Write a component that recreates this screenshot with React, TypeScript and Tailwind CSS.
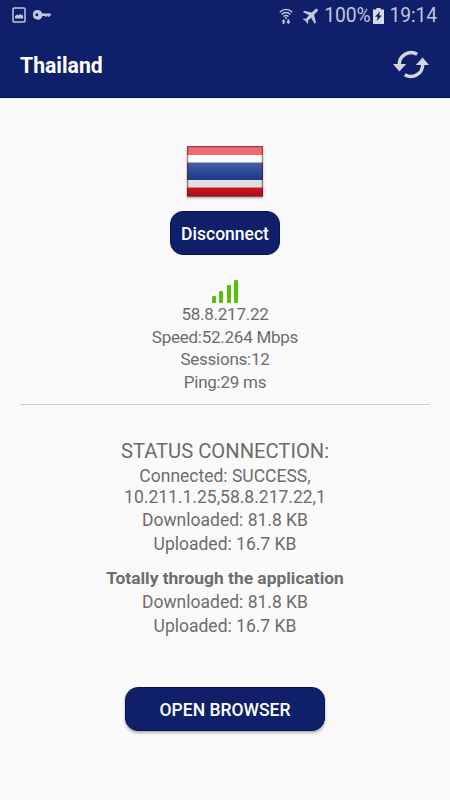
const serverInfo = ["58.8.217.22", "Speed:52.264 Mbps", "Sessions:12", "Ping:29 ms"];

const traffic = ["Downloaded: 81.8 KB", "Uploaded: 16.7 KB"];

function StatusBar() {
  return (
    <div className="flex h-8 items-center justify-between pl-3 pr-[13px] text-[#c3c6dc]">
      <div className="flex items-center gap-[7px]">
        <svg width="14" height="16" viewBox="0 0 14 16" fill="none" className="relative -top-px">
          <rect x="1" y="1" width="12" height="14" rx="1" stroke="currentColor" strokeWidth="1.5" />
          <path d="M3 11.4V9.3l2-1.8 1.3 1.1L8 6.8l1.2 1.4 1-.6.9 1.4v2.4z" fill="currentColor" />
        </svg>
        <svg width="18" height="10" viewBox="0 0 18 10" className="relative -top-px">
          <path
            d="M4.7 0a4.8 4.8 0 0 1 4.5 3.4H17a.9.9 0 0 1 .9.9v1.2h-1.4v1.3h-1.8V5.7h-1v1.1h-1.6V5.9H9.3A4.8 4.8 0 1 1 4.7 0zM3.8 3.3a1.5 1.5 0 1 0 0 3 1.5 1.5 0 0 0 0-3z"
            fill="currentColor"
            fillRule="evenodd"
          />
        </svg>
      </div>
      <div className="flex items-center">
        <svg width="14" height="16" viewBox="0 0 14 16" fill="none" stroke="currentColor" className="mr-[9px]">
          <path d="M.8 4.2c3.5-3.8 8.9-3.8 12.4 0M2.6 6.5c2.6-2.7 6.2-2.7 8.8 0M4.5 8.6c1.5-1.4 3.5-1.4 5 0" strokeWidth="1.4" />
          <circle cx="7" cy="9.9" r="1" fill="currentColor" stroke="none" />
          <path d="M4.6 11.2 6.4 13v.6H5.5V16H3.7v-2.4h-.9V13zM9.4 16 7.6 14.2v-.6h.9v-2.4h1.8v2.4h.9v.6z" fill="currentColor" stroke="none" />
        </svg>
        <svg width="17" height="17" viewBox="0 0 18 18" className="mr-[5px]">
          <path
            d="M16.4 1.2c.7.7.5 1.8-.2 2.5l-3.4 3.5 1.9 8.2-1.4 1.3-3.6-6.5-3.4 3.3.3 2.3-1 1-1.7-3.1L.8 12l1-1 2.4.3 3.2-3.5L1 4.3 2.4 3l8 1.8 3.5-3.4c.7-.7 1.8-.9 2.5-.2z"
            fill="currentColor"
          />
        </svg>
        <span className="text-[19.3px] leading-8 tracking-[-0.1px]">100%</span>
        <svg width="11" height="16" viewBox="0 0 11 16" className="ml-[3px] mr-[5px]">
          <path d="M3.3 0h4.4v1.6H11V16H0V1.6h3.3z" fill="#d9dbe8" />
          <path d="M7.2 3.3 2 8.7h2.8L3.6 13.2l5.3-5.7H6z" fill="#101f69" />
        </svg>
        <span className="text-[19.3px] leading-8 tracking-[-0.1px]">19:14</span>
      </div>
    </div>
  );
}

function RefreshIcon() {
  return (
    <svg width="38" height="30" viewBox="0 0 38 30" fill="none">
      <path
        d="M25.2 4.3A11.8 11.8 0 0 0 7.3 14.8M12.8 24.7A11.8 11.8 0 0 0 30.7 14.2"
        stroke="#d3d5e3"
        strokeWidth="3.4"
      />
      <path d="M1 14h13.2L7.4 21.6zM37 15H23.8l6.8-7.6z" fill="#d3d5e3" />
    </svg>
  );
}

function ThaiFlag() {
  return (
    <svg width="78" height="53" viewBox="0 0 78 53" className="drop-shadow-[0_1px_1px_rgba(0,0,0,0.35)]">
      <defs>
        <linearGradient id="blue" x1="0" y1="0" x2="0" y2="1">
          <stop offset="0" stopColor="#4a63a4" />
          <stop offset="0.5" stopColor="#2c4a94" />
          <stop offset="1" stopColor="#1d3b88" />
        </linearGradient>
        <linearGradient id="red" x1="0" y1="0" x2="0" y2="1">
          <stop offset="0" stopColor="#d0101c" />
          <stop offset="1" stopColor="#a80f18" />
        </linearGradient>
      </defs>
      <rect x="1" y="1" width="76" height="51" fill="#fcfcfc" />
      <rect x="1" y="1" width="76" height="9" fill="#ec6b70" />
      <rect x="1" y="17.5" width="76" height="17.5" fill="url(#blue)" />
      <rect x="1" y="35" width="76" height="7.5" fill="#e0e0e0" />
      <rect x="1" y="42.5" width="76" height="9" fill="url(#red)" />
      <rect x="1.5" y="1.5" width="75" height="50" fill="none" stroke="#40202c" strokeOpacity="0.5" />
      <rect x="2.5" y="2.5" width="73" height="48" fill="none" stroke="#801020" strokeOpacity="0.15" />
    </svg>
  );
}

function SignalBars() {
  return (
    <div className="flex h-[23px] items-end gap-[3.2px]">
      <span className="h-[7px] w-1 rounded-[1px] bg-[#56c10a]" />
      <span className="h-3 w-1 rounded-[1px] bg-[#56c10a]" />
      <span className="h-[18px] w-1 rounded-[1px] bg-[#56c10a]" />
      <span className="h-[23px] w-1 rounded-[1px] bg-[#56c10a]" />
    </div>
  );
}

function Traffic() {
  return (
    <>
      {traffic.map((line) => (
        <p key={line} className="text-[17.5px] leading-6">
          {line}
        </p>
      ))}
    </>
  );
}

export default function App() {
  return (
    <div className="flex h-[800px] w-full flex-col bg-[#fafafa] font-['Roboto',sans-serif] text-[#6d6d6d]">
      <header className="h-[98px] shrink-0 border-b border-[#030f57] bg-[#101f69]">
        <StatusBar />
        <div className="flex h-[65px] items-center justify-between pl-5 pr-5">
          <h1 className="pt-0.5 text-[21.2px] font-bold leading-6 text-white">Thailand</h1>
          <RefreshIcon />
        </div>
      </header>

      <main className="flex flex-col items-center px-5 pt-[47px] text-center">
        <ThaiFlag />
        <button className="mt-[13px] h-11 w-[110px] rounded-[13px] border border-[#081450] bg-[#101f69] pt-0.5 text-[17.5px] font-medium text-white">
          Disconnect
        </button>

        <div className="mt-[25px] flex flex-col items-center">
          <SignalBars />
          {serverInfo.map((line) => (
            <p key={line} className="text-[17px] leading-[22.5px] tracking-[-0.25px]">
              {line}
            </p>
          ))}
        </div>

        <div className="mt-[11px] h-px w-full bg-[#cfcfcf]" />

        <section className="mt-[33px] flex flex-col items-center">
          <h2 className="text-[20.2px] leading-[26px]">STATUS CONNECTION:</h2>
          <p className="mt-0.5 w-[240px] text-[17.5px] leading-[20.5px]">Connected: SUCCESS, 10.211.1.25,58.8.217.22,1</p>
          <div className="mt-px">
            <Traffic />
          </div>
        </section>

        <section className="mt-[9.5px]">
          <h2 className="text-[17.4px] font-bold leading-6">Totally through the application</h2>
          <Traffic />
        </section>

        <button className="mt-[49.5px] h-11 w-[200px] rounded-[13px] border border-[#081450] bg-[#101f69] pt-0.5 text-[17.5px] font-medium text-white shadow-[0_2px_3px_rgba(0,0,0,0.3)]">
          OPEN BROWSER
        </button>
      </main>
    </div>
  );
}
